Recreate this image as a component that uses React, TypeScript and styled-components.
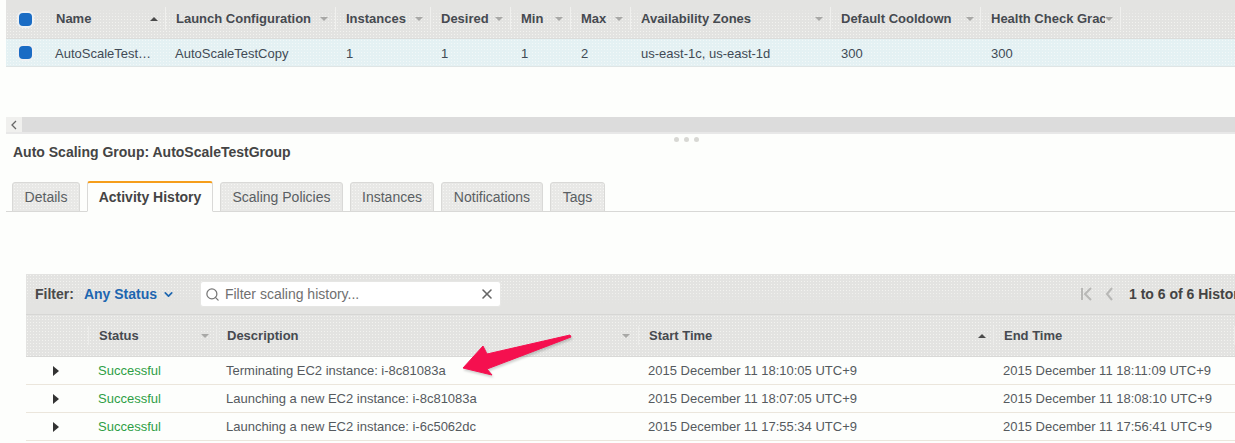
import React from "react";
import styled, { createGlobalStyle } from "styled-components";
import { Search, X, ChevronDown } from "lucide-react";

const Global = createGlobalStyle`
  html, body { margin: 0; padding: 0; background: #fdfefc; }
  body { font-family: "Liberation Sans", Arial, sans-serif; color: #444; }
`;

const dither = `
  background-color: #e3e3e1;
  background-image:
    linear-gradient(180deg, #e3e3e1 0, #e3e3e1 22%, rgba(227,227,225,0) 45%),
    radial-gradient(circle, #f3f3f0 0.7px, transparent 0.8px);
  background-size: 100% 100%, 3px 3px;
`;

const Page = styled.div`
  position: relative;
  width: 1235px;
  height: 443px;
  overflow: hidden;
  background: #fdfefc;
`;

const TopGrid = styled.div`
  margin-left: 6px;
  height: 117px;
`;

const topCols = "40px 120px 170px 95px 80px 60px 60px 200px 150px 140px 1fr";

const TopHeader = styled.div`
  display: grid;
  grid-template-columns: ${topCols};
  height: 38px;
  border-bottom: 1px solid #dcdcda;
  ${dither}
`;

const TopRow = styled.div`
  display: grid;
  grid-template-columns: ${topCols};
  height: 27px;
  border-bottom: 1px solid #dfe5e5;
  background-color: #e4f1f3;
  background-image: radial-gradient(circle, #f2f8f8 0.6px, transparent 0.7px);
  background-size: 3px 3px;
`;

const HeadCell = styled.div`
  position: relative;
  display: flex;
  align-items: center;
  padding-left: 10px;
  margin: 7px 0 8px;
  font-size: 13px;
  font-weight: 700;
  color: #464a50;
  white-space: nowrap;
  overflow: hidden;
  border-right: 1px solid #f0f0ee;
`;

const ClippedLabel = styled.span`
  display: block;
  width: 114px;
  overflow: hidden;
  flex: none;
`;

const SortArrow = styled.span<{ $up?: boolean; $right: number }>`
  position: absolute;
  right: ${(p) => p.$right}px;
  top: 50%;
  margin-top: -2px;
  width: 0;
  height: 0;
  border-left: 4px solid transparent;
  border-right: 4px solid transparent;
  ${(p) =>
    p.$up
      ? "border-bottom: 4px solid #4a4a4a;"
      : "border-top: 4px solid #a8a8a6;"}
`;

const DataCell = styled.div`
  display: flex;
  align-items: center;
  padding: 1px 0 0 9px;
  font-size: 13px;
  color: #414a55;
  white-space: nowrap;
  overflow: hidden;
`;

const NumCell = styled(DataCell)`
  padding-left: 10px;
`;

const CheckCell = styled.div`
  display: flex;
  align-items: center;
  justify-content: center;
  padding-right: 2px;
`;

const Check = styled.span`
  display: block;
  width: 13px;
  height: 13px;
  border-radius: 4px;
  background: #1a6cc4;
  box-shadow: 0 0 0 2px #eef1f3;
`;

const Scrollbar = styled.div`
  display: flex;
  margin-left: 6px;
  height: 15px;
  border-bottom: 2px solid #e8e8e8;
  background: #dcdcdc;
`;

const ScrollButton = styled.div`
  width: 16px;
  display: flex;
  align-items: center;
  justify-content: center;
  background: #f0f0ee;
  color: #666;
`;

const HandleRow = styled.div`
  display: flex;
  justify-content: center;
  gap: 5px;
  height: 7px;
  padding: 3px 0 0 138px;
  box-sizing: content-box;
`;

const HandleDot = styled.span`
  width: 5px;
  height: 5px;
  border-radius: 50%;
  background: #d8d8d4;
`;

const Title = styled.h2`
  margin: 0 0 0 13px;
  height: 22px;
  line-height: 15px;
  padding-top: 1px;
  font-size: 14px;
  font-weight: 700;
  color: #444;
`;

const Tabs = styled.div`
  display: flex;
  align-items: flex-end;
  gap: 7px;
  height: 31px;
  margin: 13px 0 0 6px;
  padding-left: 6px;
  border-bottom: 1px solid #d8d8d6;
`;

const Tab = styled.div<{ $active?: boolean; $w: number }>`
  box-sizing: border-box;
  width: ${(p) => p.$w}px;
  height: ${(p) => (p.$active ? 31 : 30)}px;
  margin-bottom: -1px;
  display: flex;
  align-items: center;
  justify-content: center;
  font-size: 14px;
  border-radius: 3px 3px 0 0;
  border: 1px solid #d9d9d7;
  ${(p) =>
    p.$active
      ? `
    background: #fdfefc;
    border-top: 2px solid #f59e1b;
    border-bottom-color: #fdfefc;
    font-weight: 700;
    color: #444;
  `
      : `
    background-color: #e8e8e6;
    background-image: radial-gradient(circle, #f5f5f3 0.7px, transparent 0.8px);
    background-size: 3px 3px;
    color: #5a5f63;
  `}
`;

const History = styled.section`
  margin: 62px 0 0 26px;
  width: 1209px;
`;

const FilterBar = styled.div`
  display: flex;
  align-items: center;
  height: 40px;
  padding-left: 9px;
  border-bottom: 1px solid #d6d6d4;
  ${dither}
  background-image:
    linear-gradient(0deg, #e3e3e1 0, #e3e3e1 25%, rgba(227,227,225,0) 55%),
    radial-gradient(circle, #f3f3f0 0.7px, transparent 0.8px);
`;

const FilterLabel = styled.span`
  font-size: 14px;
  font-weight: 700;
  color: #4a4a4a;
`;

const FilterValue = styled.span`
  display: flex;
  align-items: center;
  gap: 5px;
  margin-left: 10px;
  font-size: 14px;
  font-weight: 700;
  color: #1d66b0;
  width: 116px;
`;

const SearchBox = styled.div`
  display: flex;
  align-items: center;
  box-sizing: border-box;
  width: 301px;
  height: 26px;
  padding: 0 5px 0 4px;
  background: #fff;
  border: 1px solid #e6e6e4;
  border-radius: 3px;
  font-size: 14px;
  color: #707070;
`;

const SearchText = styled.span`
  flex: 1;
  margin-left: 5px;
`;

const Pager = styled.div`
  display: flex;
  align-items: center;
  margin-left: auto;
  white-space: nowrap;
  width: 155px;
  flex: none;
  font-size: 14px;
  font-weight: 700;
  color: #444;
`;

const PagerIcon = styled.svg`
  flex: none;
  margin-right: 12px;
`;

const PagerText = styled.span`
  margin-left: 3px;
`;

const histCols = "63px 128px 422px 355px 1fr";

const HistHeader = styled.div`
  display: grid;
  grid-template-columns: ${histCols};
  height: 42px;
  ${dither}
  background-image: radial-gradient(circle, #f3f3f0 0.7px, transparent 0.8px);
  background-size: 3px 3px;
  border-bottom: 1px solid #d8d8d6;
  box-sizing: border-box;
`;

const HistHead = styled.div`
  position: relative;
  display: flex;
  align-items: center;
  padding-left: 10px;
  margin: 11px 0;
  font-size: 13px;
  font-weight: 700;
  color: #464a50;
  border-right: 1px solid #ececea;
`;

const HistRow = styled.div`
  display: grid;
  grid-template-columns: ${histCols};
  height: 28px;
  box-sizing: border-box;
  border-bottom: 1px solid #ebe6dc;
  align-items: center;
`;

const Expander = styled.span`
  justify-self: start;
  margin-left: 27px;
  width: 0;
  height: 0;
  border-top: 5px solid transparent;
  border-bottom: 5px solid transparent;
  border-left: 6px solid #333;
`;

const StatusText = styled.span`
  padding-left: 9px;
  font-size: 13px;
  color: #2e9e45;
`;

const RowText = styled.span`
  padding-left: 9px;
  font-size: 13px;
  color: #555a5e;
  white-space: nowrap;
`;

const Arrow = styled.svg`
  position: absolute;
  left: 455px;
  top: 328px;
  filter: drop-shadow(1px 2px 1px rgba(0, 0, 0, 0.18));
`;

const topHeads: [string, number][] = [
  ["Launch Configuration", 7],
  ["Instances", 7],
  ["Desired", 7],
  ["Min", 7],
  ["Max", 7],
  ["Availability Zones", 7],
  ["Default Cooldown", 6],
];

const topValues = ["1", "1", "1", "2", "us-east-1c, us-east-1d", "300", "300"];

const tabs = [
  { label: "Details", w: 68 },
  { label: "Activity History", w: 126, active: true },
  { label: "Scaling Policies", w: 123 },
  { label: "Instances", w: 84 },
  { label: "Notifications", w: 102 },
  { label: "Tags", w: 55 },
];

const rows = [
  ["Terminating EC2 instance: i-8c81083a", "2015 December 11 18:10:05 UTC+9", "2015 December 11 18:11:09 UTC+9"],
  ["Launching a new EC2 instance: i-8c81083a", "2015 December 11 18:07:05 UTC+9", "2015 December 11 18:08:10 UTC+9"],
  ["Launching a new EC2 instance: i-6c5062dc", "2015 December 11 17:55:34 UTC+9", "2015 December 11 17:56:41 UTC+9"],
];

export default function App() {
  return (
    <Page>
      <Global />
      <TopGrid>
        <TopHeader>
          <CheckCell>
            <Check />
          </CheckCell>
          <HeadCell>
            Name
            <SortArrow $up $right={7} />
          </HeadCell>
          {topHeads.map(([label, right]) => (
            <HeadCell key={label}>
              {label}
              <SortArrow $right={right} />
            </HeadCell>
          ))}
          <HeadCell>
            <ClippedLabel>Health Check Grace Period</ClippedLabel>
            <SortArrow $right={7} />
          </HeadCell>
          <div />
        </TopHeader>
        <TopRow>
          <CheckCell>
            <Check />
          </CheckCell>
          <DataCell>AutoScaleTest…</DataCell>
          <DataCell>AutoScaleTestCopy</DataCell>
          {topValues.map((v, i) => (
            <NumCell key={i}>{v}</NumCell>
          ))}
          <div />
        </TopRow>
      </TopGrid>

      <Scrollbar>
        <ScrollButton>
          <svg width="8" height="10" viewBox="0 0 8 10" fill="none" stroke="#666" strokeWidth="1.3">
            <path d="M6 1 2 5l4 4" />
          </svg>
        </ScrollButton>
      </Scrollbar>
      <HandleRow>
        <HandleDot />
        <HandleDot />
        <HandleDot />
      </HandleRow>

      <Title>Auto Scaling Group: AutoScaleTestGroup</Title>

      <Tabs>
        {tabs.map((t) => (
          <Tab key={t.label} $w={t.w} $active={t.active}>
            {t.label}
          </Tab>
        ))}
      </Tabs>

      <History>
        <FilterBar>
          <FilterLabel>Filter:</FilterLabel>
          <FilterValue>
            Any Status
            <ChevronDown size={13} strokeWidth={3} />
          </FilterValue>
          <SearchBox>
            <Search size={15} color="#777" strokeWidth={2} />
            <SearchText>Filter scaling history...</SearchText>
            <X size={16} color="#666" strokeWidth={2.4} />
          </SearchBox>
          <Pager>
            <PagerIcon width="13" height="14" viewBox="0 0 13 14" fill="none" stroke="#b8b8b6" strokeWidth="2">
              <path d="M2 1v12M11 1 5 7l6 6" />
            </PagerIcon>
            <PagerIcon width="9" height="14" viewBox="0 0 9 14" fill="none" stroke="#b8b8b6" strokeWidth="2">
              <path d="M7 1 2 7l5 6" />
            </PagerIcon>
            <PagerText>1 to 6 of 6 History</PagerText>
          </Pager>
        </FilterBar>
        <HistHeader>
          <HistHead />
          <HistHead>
            Status
            <SortArrow $right={7} />
          </HistHead>
          <HistHead>
            Description
            <SortArrow $right={8} />
          </HistHead>
          <HistHead>
            Start Time
            <SortArrow $up $right={7} />
          </HistHead>
          <HistHead>End Time</HistHead>
        </HistHeader>
        {rows.map((r) => (
          <HistRow key={r[1]}>
            <Expander />
            <StatusText>Successful</StatusText>
            <RowText>{r[0]}</RowText>
            <RowText>{r[1]}</RowText>
            <RowText>{r[2]}</RowText>
          </HistRow>
        ))}
      </History>

      <Arrow width="122" height="54" viewBox="0 0 122 54">
        <path d="M115 7 116 9 32 41 37 47 8 40 28 18 32 26Z" fill="#f5104f" stroke="#f5104f" strokeWidth="1" strokeLinejoin="round" />
      </Arrow>
    </Page>
  );
}
